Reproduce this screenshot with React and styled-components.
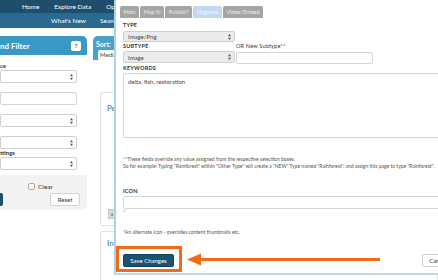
import { createGlobalStyle, styled } from "styled-components";

const GlobalStyle = createGlobalStyle`
  html, body { margin: 0; padding: 0; }
  body {
    font-family: Lato, "Open Sans", sans-serif;
    background: #fff;
    color: #333;
  }
  #root { width: 438px; height: 280px; overflow: hidden; }
`;

const Page = styled.div`
  position: relative;
  width: 438px;
  height: 280px;
  overflow: hidden;
  background: #fff;
`;

const NavRow = styled.div`
  height: ${(p) => p.h}px;
  background: ${(p) => p.bg};
  display: flex;
  align-items: center;
  gap: ${(p) => p.gap}px;
  padding-left: ${(p) => p.pl}px;
  color: #fff;
  font-size: 6.5px;
  white-space: nowrap;
`;

const Body = styled.div`
  display: flex;
  gap: 6px;
  padding-top: 8px;
`;

const Sidebar = styled.div`
  width: 87px;
  flex: none;
`;

const SideHeader = styled.div`
  height: 19px;
  background: #3a98c4;
  border-radius: 0 5px 0 0;
  display: flex;
  align-items: center;
  justify-content: space-between;
  padding-right: 6px;
  color: #fff;
  font-weight: 700;
  font-size: 8px;
  box-sizing: border-box;
`;

const HelpBtn = styled.span`
  width: 10px;
  height: 10px;
  background: #fff;
  border-radius: 2px;
  color: #333;
  font-size: 5.5px;
  font-weight: 700;
  display: flex;
  align-items: center;
  justify-content: center;
`;

const SideBody = styled.div`
  padding: 7px 10px 5px 0;
  display: flex;
  flex-direction: column;
`;

const SideLabel = styled.div`
  font-size: 6px;
  font-weight: 700;
  line-height: 7px;
  color: #333;
  margin-top: ${(p) => p.mt || 0}px;
`;

const Select = styled.div`
  box-sizing: border-box;
  width: ${(p) => (p.w ? `${p.w}px` : "100%")};
  height: ${(p) => p.h || 13}px;
  margin-top: ${(p) => p.mt || 0}px;
  background: ${(p) => p.bg || "#fff"};
  border: 1px solid #cfcfcf;
  border-radius: 2px;
  display: flex;
  align-items: center;
  justify-content: space-between;
  padding: 0 3px 0 4px;
  font-size: 6px;
  color: #444;
  flex: none;
`;

const TextInput = styled.div`
  box-sizing: border-box;
  width: ${(p) => (p.w ? `${p.w}px` : "100%")};
  height: ${(p) => p.h || 13}px;
  margin-top: ${(p) => p.mt || 0}px;
  background: #fff;
  border: 1px solid #d4d4d4;
  border-radius: 2px;
  flex: none;
`;

const SideFooter = styled.div`
  background: #f3f3f3;
  border-radius: 0 0 6px 0;
  padding: 7px 7px 4px 0;
`;

const ClearRow = styled.label`
  display: flex;
  align-items: center;
  gap: 3px;
  padding-left: 28px;
  height: 8px;
  font-size: 6.5px;
  color: #333;
`;

const Check = styled.span`
  width: 5px;
  height: 5px;
  border: 1px solid #aaa;
  border-radius: 2px;
  background: #fff;
`;

const BtnRow = styled.div`
  display: flex;
  justify-content: space-between;
  margin-top: 3px;
`;

const ApplyBtn = styled.span`
  width: 3px;
  height: 13px;
  background: #1c4f6e;
  border-radius: 0 2px 2px 0;
`;

const ResetBtn = styled.span`
  box-sizing: border-box;
  width: 30px;
  height: 13px;
  background: #fff;
  border: 1px solid #d2d2d2;
  border-radius: 2px;
  font-size: 6px;
  color: #333;
  display: flex;
  align-items: center;
  justify-content: center;
`;

const MainCol = styled.div`
  flex: 1;
  min-width: 0;
`;

const SortBox = styled.div`
  height: 24px;
  box-sizing: border-box;
  background: #4aa1cc;
  border-radius: 5px 0 0 0;
  padding: 3px 0 0 3px;
`;

const SortLabel = styled.div`
  color: #fff;
  font-weight: 700;
  font-size: 7px;
  line-height: 10px;
`;

const SortSelect = styled.div`
  margin: 1px 0 0 2px;
  height: 10px;
  background: #fff;
  border-radius: 2px 0 0 2px;
  font-size: 6px;
  line-height: 10px;
  padding-left: 2px;
  color: #444;
`;

const Card = styled.div`
  margin: ${(p) => p.mt}px 0 0 7px;
  height: ${(p) => p.h}px;
  box-sizing: border-box;
  border: 1px solid #e0e0e0;
  border-radius: 3px;
  background: #fff;
  padding: ${(p) => p.pt}px 0 0 6px;
  display: flex;
  flex-direction: column;
`;

const CardTitle = styled.div`
  color: #2a77a3;
  font-size: 8px;
  line-height: 10px;
  white-space: nowrap;
`;

const Thumb = styled.div`
  margin-top: auto;
  margin-bottom: 6px;
  margin-left: 1px;
  width: 6px;
  height: 8px;
  background: #d9d9d9;
  border: 1px solid #c4c4c4;
  display: flex;
  align-items: center;
  justify-content: center;
`;

/* ---------- modal ---------- */

const Modal = styled.div`
  position: absolute;
  left: 114px;
  top: 0;
  width: 350px;
  height: 275px;
  box-sizing: border-box;
  background: #fff;
  border-left: 2px solid #a9d5e7;
  border-bottom: 2px solid #b3dbea;
  padding: 6px 10px 0 4px;
`;

const Tabs = styled.div`
  display: flex;
  gap: 1px;
`;

const Tab = styled.span`
  height: 12px;
  line-height: 12px;
  padding: 0 3.5px;
  font-size: 5.5px;
  white-space: nowrap;
  border-radius: 2px 2px 0 0;
  background: ${(p) => (p.active ? "#c2d9f3" : "#a5a5a5")};
  color: ${(p) => (p.active ? "#f4f8ff" : "#ececec")};
`;

const Pane = styled.div`
  padding-left: 3px;
  display: flex;
  flex-direction: column;
`;

const Label = styled.div`
  font-size: 5.5px;
  font-weight: ${(p) => (p.light ? 400 : 700)};
  line-height: 7px;
  color: #333;
  letter-spacing: 0.2px;
  margin-top: ${(p) => p.mt || 0}px;
  width: ${(p) => (p.w ? `${p.w}px` : "auto")};
  flex: none;
`;

const LabelRow = styled.div`
  display: flex;
  margin-top: ${(p) => p.mt || 0}px;
`;

const FieldRow = styled.div`
  display: flex;
  gap: 1px;
  align-items: flex-start;
`;

const TextArea = styled.div`
  box-sizing: border-box;
  height: 65px;
  margin-top: 1px;
  border: 1px solid #d4d4d4;
  border-radius: 2px;
  padding: 4px;
  font-size: 6px;
  color: #444;
`;

const Note = styled.div`
  font-size: 5px;
  line-height: 7px;
  color: #555;
  white-space: nowrap;
  margin-top: ${(p) => p.mt || 0}px;
`;

const Footer = styled.div`
  display: flex;
  justify-content: space-between;
  margin-top: 18px;
`;

const SaveBtn = styled.span`
  box-sizing: border-box;
  width: 51px;
  height: 13px;
  background: #1c5374;
  border: 1px solid #123e58;
  border-radius: 2px;
  color: #fff;
  font-size: 6px;
  display: flex;
  align-items: center;
  justify-content: center;
`;

const CancelBtn = styled.span`
  box-sizing: border-box;
  width: 32px;
  height: 13px;
  background: #fff;
  border: 1px solid #cfcfcf;
  border-radius: 2px;
  color: #333;
  font-size: 6px;
  display: flex;
  align-items: center;
  justify-content: center;
`;

const Highlight = styled.div`
  position: absolute;
  left: 116px;
  top: 246px;
  width: 66px;
  height: 26px;
  box-sizing: border-box;
  border: 3px solid #f26b14;
`;

const Arrow = styled.svg`
  position: absolute;
  left: 186px;
  top: 252px;
`;

function Updown() {
  return (
    <svg width="3" height="6" viewBox="0 0 3 6">
      <path d="M1.5 0 L3 2.2 H0 Z M1.5 6 L3 3.8 H0 Z" fill="#555" />
    </svg>
  );
}

export default function App() {
  return (
    <Page>
      <GlobalStyle />
      <NavRow h={13} bg="#1f4e6d" gap={15} pl={22}>
        <span>Home</span>
        <span>Explore Data</span>
        <span>Open Data</span>
      </NavRow>
      <NavRow h={15} bg="#2b6a90" gap={14} pl={51}>
        <span>What's New</span>
        <span>Search</span>
      </NavRow>

      <Body>
        <Sidebar>
          <SideHeader>
            <span>nd Filter</span>
            <HelpBtn>?</HelpBtn>
          </SideHeader>
          <SideBody>
            <SideLabel>ce</SideLabel>
            <Select mt={1}>
              <span />
              <Updown />
            </Select>
            <TextInput mt={9} />
            <Select mt={9}>
              <span />
              <Updown />
            </Select>
            <Select mt={9}>
              <span />
              <Updown />
            </Select>
            <SideLabel>ttings</SideLabel>
            <Select mt={1}>
              <span />
              <Updown />
            </Select>
          </SideBody>
          <SideFooter>
            <ClearRow>
              <Check />
              Clear
            </ClearRow>
            <BtnRow>
              <ApplyBtn />
              <ResetBtn>Reset</ResetBtn>
            </BtnRow>
          </SideFooter>
        </Sidebar>

        <MainCol>
          <SortBox>
            <SortLabel>Sort:</SortLabel>
            <SortSelect>Media Type</SortSelect>
          </SortBox>
          <Card mt={32} h={134} pt={10}>
            <CardTitle>Permissions</CardTitle>
            <Thumb>
              <svg width="4" height="5" viewBox="0 0 4 5">
                <path d="M0.5 3 L2 1 L3.5 3 L2 4.5 Z" fill="#6cbf3a" />
              </svg>
            </Thumb>
          </Card>
          <Card mt={5} h={60} pt={6}>
            <CardTitle>Information</CardTitle>
          </Card>
        </MainCol>
      </Body>

      <Modal>
        <Tabs>
          <Tab>Main</Tab>
          <Tab>Map It!</Tab>
          <Tab>Publish?</Tab>
          <Tab active>Organize</Tab>
          <Tab>Video/Embed</Tab>
        </Tabs>
        <Pane>
          <Label mt={4}>TYPE</Label>
          <Select w={112} h={11} mt={2} bg="#ebebeb">
            <span>Image/Png</span>
            <Updown />
          </Select>
          <LabelRow mt={1}>
            <Label w={113}>SUBTYPE</Label>
            <Label light>OR New Subtype**</Label>
          </LabelRow>
          <FieldRow>
            <Select w={112} h={12} mt={1} bg="#ebebeb">
              <span>Image</span>
              <Updown />
            </Select>
            <TextInput w={137} h={12} mt={2} />
          </FieldRow>
          <Label mt={1}>KEYWORDS</Label>
          <TextArea>delta, fish, restoration</TextArea>
          <Note mt={18}>
            **These fields override any value assigned from the respective selection boxes.
          </Note>
          <Note>
            So for example: Typing "Rainforest" within "Other Type" will create a "NEW" Type
            named "Rainforest", and assign this page to type "Rainforest".
          </Note>
          <Label mt={18}>ICON</Label>
          <TextInput mt={1} />
          <Note>*</Note>
          <Note mt={13}>*An alternate icon - overrides content thumbnails etc.</Note>
          <Footer>
            <SaveBtn>Save Changes</SaveBtn>
            <CancelBtn>Cancel</CancelBtn>
          </Footer>
        </Pane>
      </Modal>

      <Highlight />
      <Arrow width="196" height="15" viewBox="0 0 196 15">
        <path d="M1 7.5 L15 1.5 L15 13.5 Z" fill="#f26b14" />
        <path d="M14 7.5 H194" stroke="#f26b14" strokeWidth="3" />
      </Arrow>
    </Page>
  );
}
